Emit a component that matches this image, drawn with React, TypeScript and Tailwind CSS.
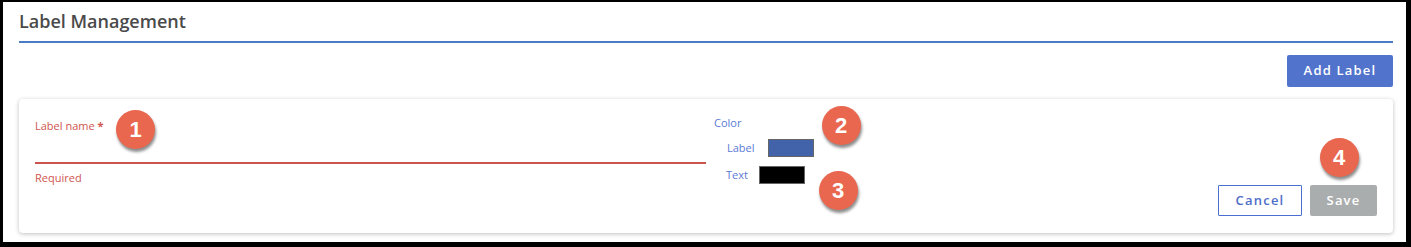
import React from "react";

function Badge({ n, x, y }: { n: string; x: number; y: number }) {
  return (
    <div
      className="absolute w-[39px] h-[39px] rounded-full bg-[#e9664f] flex items-center justify-center text-white text-[22px] font-bold shadow-[1px_3px_3px_rgba(0,0,0,0.45)]"
      style={{ left: x - 19.5, top: y - 19.5, fontFamily: '"Liberation Sans", Arial, sans-serif' }}
    >
      {n}
    </div>
  );
}

export default function App() {
  return (
    <div
      className="relative w-[1411px] h-[247px] bg-white border-l-[3px] border-t-2 border-r-[5px] border-b-[5px] border-black pl-4 pr-[13px] flex flex-col"
      style={{ fontFamily: '"Open Sans", "Noto Sans", sans-serif' }}
    >
      <div className="pt-[7px] pb-[8px] border-b-2 border-[#4a7cc6]">
        <h1 className="text-[18px] leading-[24px] font-semibold text-[#4a4a4a]">Label Management</h1>
      </div>
      <div className="flex justify-end mt-[12px]">
        <button className="w-[106px] h-[32px] rounded-[2px] bg-[#5173cc] text-white text-[13px] font-semibold tracking-[1.2px]">
          Add Label
        </button>
      </div>
      <div className="mt-[12px] h-[134px] rounded-[4px] bg-white shadow-[0_1px_4px_rgba(0,0,0,0.25)] flex pl-4 pr-4">
        <div className="w-[671px] pt-[19px] flex flex-col">
          <div className="text-[11px] leading-[16px] text-[#d0564f]">
            Label name <span className="font-bold">*</span>
          </div>
          <div className="h-[30px] border-b-2 border-[#c9554d]"></div>
          <div className="mt-[6px] text-[11px] leading-[16px] text-[#d0564f]">Required</div>
        </div>
        <div className="ml-[8px] pt-[16px] flex flex-col text-[11px] leading-[16px] text-[#5b7bd5]">
          <div>Color</div>
          <div className="mt-[8px] h-[18px] flex items-center pl-[13px]">
            <span className="w-[41px]">Label</span>
            <span className="w-[46px] h-[18px] bg-[#4262aa] border border-[#666]"></span>
          </div>
          <div className="mt-[9px] h-[18px] flex items-center pl-[12px]">
            <span className="w-[33px]">Text</span>
            <span className="w-[46px] h-[18px] bg-black border border-[#666]"></span>
          </div>
        </div>
        <div className="flex-1"></div>
        <div className="self-end pb-[17px] flex gap-[8px]">
          <button className="w-[84px] h-[31px] border border-[#4a6fd0] rounded-[1px] bg-white text-[#4e6ec8] text-[13px] font-semibold tracking-[1.2px]">
            Cancel
          </button>
          <button className="w-[67px] h-[31px] rounded-[2px] bg-[#aaadae] text-white text-[13px] font-semibold tracking-[1.2px]">
            Save
          </button>
        </div>
      </div>
      <Badge n="1" x={132.5} y={127.5} />
      <Badge n="2" x={838} y={123} />
      <Badge n="3" x={835} y={188} />
      <Badge n="4" x={1336} y={155} />
    </div>
  );
}
